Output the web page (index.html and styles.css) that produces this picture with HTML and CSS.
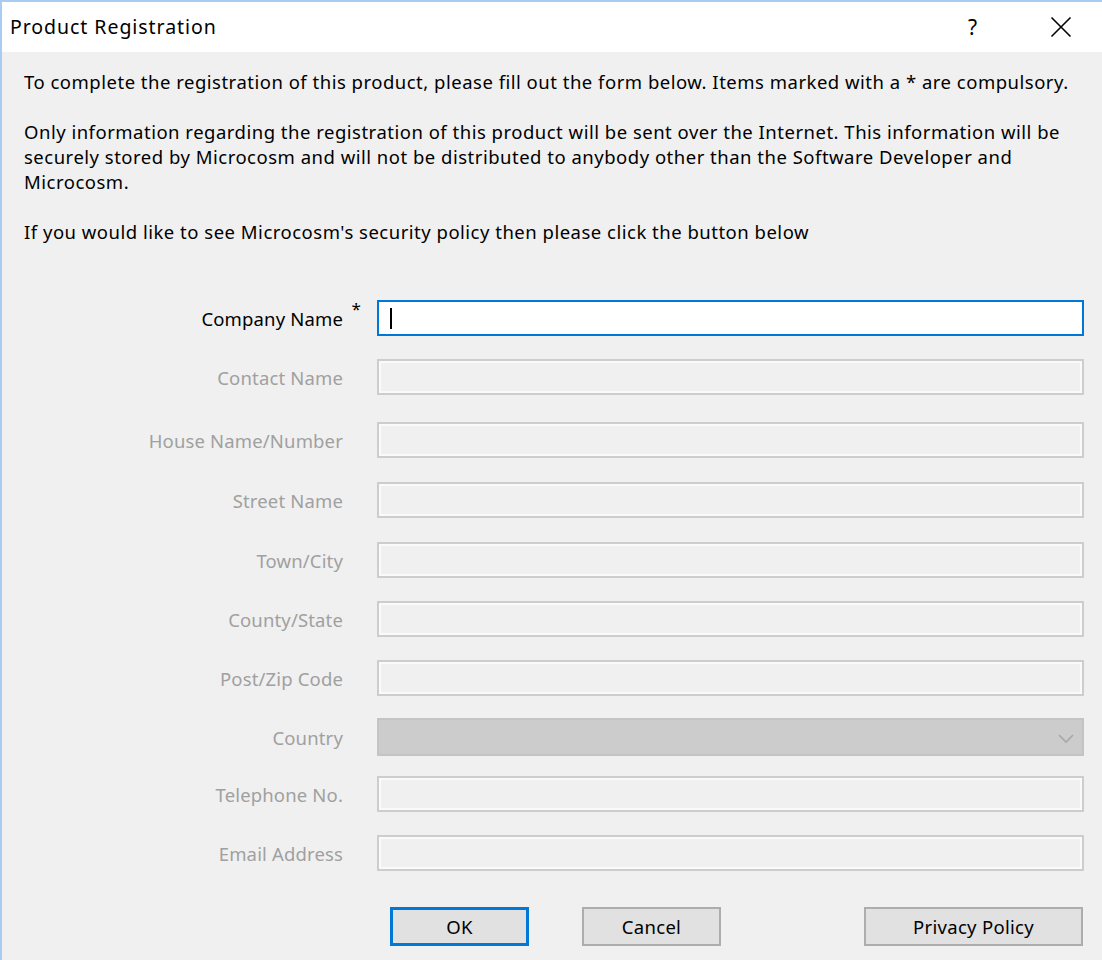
FILE: index.html
```html
<!DOCTYPE html>
<html>
<head>
<meta charset="utf-8">
<link rel="stylesheet" href="styles.css">
</head>
<body>
<div class="window">
  <div class="titlebar">
    <div class="title">Product Registration</div>
    <div class="tb-buttons">
      <span class="tb-help">?</span>
      <span class="tb-close">
        <svg width="22" height="22" viewBox="0 0 22 22"><path d="M1.5 1.5 L20.5 20.5 M20.5 1.5 L1.5 20.5" stroke="#000" stroke-width="1.6" fill="none"/></svg>
      </span>
    </div>
  </div>
  <div class="content">
    <p class="para">To complete the registration of this product, please fill out the form below. Items marked with a * are compulsory.</p>
    <p class="para">Only information regarding the registration of this product will be sent over the Internet. This information will be securely stored by Microcosm and will not be distributed to anybody other than the Software Developer and Microcosm.</p>
    <p class="para">If you would like to see Microcosm's security policy then please click the button below</p>

    <div class="form">
      <div class="row r1">
        <div class="label active">Company Name<span class="star">*</span></div>
        <div class="field focus"><span class="caret"></span></div>
      </div>
      <div class="row r2">
        <div class="label">Contact Name</div>
        <div class="field"></div>
      </div>
      <div class="row r3">
        <div class="label">House Name/Number</div>
        <div class="field"></div>
      </div>
      <div class="row r4">
        <div class="label">Street Name</div>
        <div class="field"></div>
      </div>
      <div class="row r5">
        <div class="label">Town/City</div>
        <div class="field"></div>
      </div>
      <div class="row r6">
        <div class="label">County/State</div>
        <div class="field"></div>
      </div>
      <div class="row r7">
        <div class="label">Post/Zip Code</div>
        <div class="field"></div>
      </div>
      <div class="row r8 tall">
        <div class="label">Country</div>
        <div class="field select">
          <svg class="chev" width="16" height="10" viewBox="0 0 16 10"><path d="M1 1 L8 8 L15 1" stroke="#a8a8a8" stroke-width="1.6" fill="none"/></svg>
        </div>
      </div>
      <div class="row r9">
        <div class="label">Telephone No.</div>
        <div class="field"></div>
      </div>
      <div class="row r10">
        <div class="label">Email Address</div>
        <div class="field"></div>
      </div>
    </div>

    <div class="buttons">
      <button class="btn ok">OK</button>
      <button class="btn cancel">Cancel</button>
      <button class="btn privacy">Privacy Policy</button>
    </div>
  </div>
</div>
</body>
</html>
```

FILE: styles.css
```css
html, body {
  margin: 0;
  padding: 0;
  background: #f0f0f0;
}
body {
  font-family: "Noto Sans", "Open Sans", "DejaVu Sans", sans-serif;
  color: #000;
}
.window {
  width: 1102px;
  height: 960px;
  box-sizing: border-box;
  border-top: 2px solid #a9cdf0;
  border-left: 2px solid #a9cdf0;
  background: #f0f0f0;
  overflow: hidden;
}
.titlebar {
  height: 50px;
  background: #fff;
  display: flex;
  align-items: center;
  justify-content: space-between;
}
.title {
  font-size: 19.5px;
  letter-spacing: 0.95px;
  padding-left: 8px;
  padding-bottom: 2px;
  color: #000;
}
.tb-buttons {
  display: flex;
  align-items: center;
}
.tb-help {
  font-size: 21px;
  width: 14px;
  margin-right: 68px;
}
.tb-close {
  display: flex;
  margin-right: 30px;
}
.content {
  padding: 17px 0 0 22px;
}
.para {
  margin: 0 0 25px 0;
  font-size: 18.5px;
  letter-spacing: 0.5px;
  line-height: 25px;
  width: 1056px;
}
.form {
  display: flex;
  flex-direction: column;
  margin-top: 56px;
}
.row {
  display: grid;
  grid-template-columns: 320px 707px;
  column-gap: 33px;
  height: 36px;
}
.row.tall {
  height: 38px;
}
.r2 { margin-top: 23px; }
.r3 { margin-top: 27px; }
.r4 { margin-top: 24px; }
.r5 { margin-top: 24px; }
.r6 { margin-top: 23px; }
.r7 { margin-top: 23px; }
.r8 { margin-top: 22px; }
.r9 { margin-top: 20px; }
.r10 { margin-top: 23px; }
.label {
  text-align: right;
  font-size: 18.5px;
  letter-spacing: 0.15px;
  color: #a0a0a0;
  display: flex;
  align-items: center;
  justify-content: flex-end;
  padding-right: 1px;
}
.label.active {
  color: #000;
  position: relative;
}
.star {
  position: absolute;
  right: -17px;
  top: -3px;
  font-size: 17px;
}
.field {
  box-sizing: border-box;
  border: 2px solid #cdcdcd;
  box-shadow: inset 0 0 0 2px #fafafa;
  background: #f0f0f0;
  position: relative;
}
.field.focus {
  border-color: #0078d7;
  background: #fff;
  box-shadow: none;
}
.caret {
  position: absolute;
  left: 11px;
  top: 6px;
  width: 2px;
  height: 21px;
  background: #000;
}
.field.select {
  background: #cccccc;
  border-color: #c4c4c4;
  box-shadow: none;
}
.chev {
  position: absolute;
  right: 8px;
  top: 14px;
}
.buttons {
  display: flex;
  margin-top: 36px;
  padding-left: 366px;
}
.btn {
  height: 39px;
  font-family: inherit;
  font-size: 18.5px;
  letter-spacing: 0.3px;
  color: #000;
  background: #e1e1e1;
  border: 2px solid #adadad;
  padding: 0;
  box-sizing: border-box;
}
.btn.ok {
  width: 139px;
  border: 3px solid #0078d7;
}
.btn.cancel {
  width: 139px;
  margin-left: 53px;
}
.btn.privacy {
  width: 219px;
  margin-left: 143px;
}
```
